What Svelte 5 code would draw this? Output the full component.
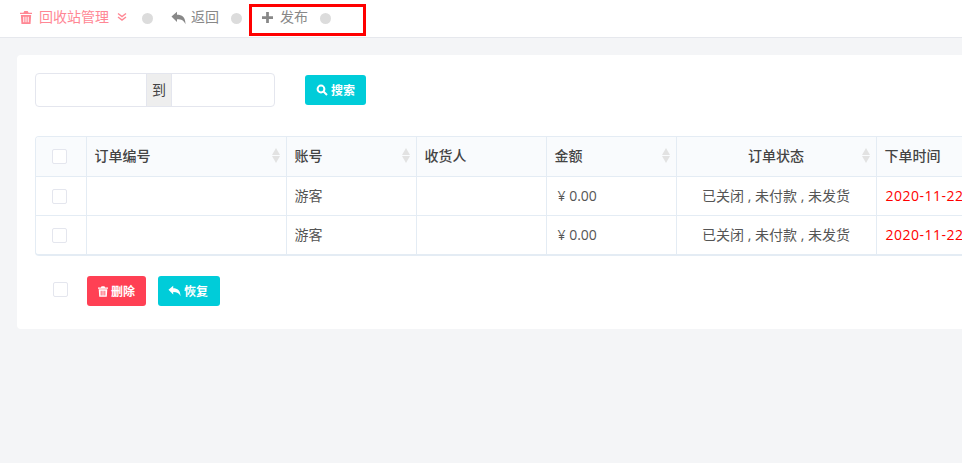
<script>
  const orders = [
    { account: '游客', amount: '¥ 0.00', status: '已关闭 , 未付款 , 未发货', time: '2020-11-22' },
    { account: '游客', amount: '¥ 0.00', status: '已关闭 , 未付款 , 未发货', time: '2020-11-22' }
  ];
  const columns = [
    { label: '订单编号', width: 200, sort: true },
    { label: '账号', width: 130, sort: true },
    { label: '收货人', width: 130 },
    { label: '金额', width: 130, sort: true },
    { label: '订单状态', width: 200, center: true, sort: true },
    { label: '下单时间', width: 200 }
  ];
  // lid + body with three slots, same shape as the nav and the delete button
  const trash = 'M5 0h4l1 2h4v1.500H0V2h4zM1 4.500h12L12.300 15H1.700zM3.800 6.500v6.500h1.200V6.500zM6.400 6.500v6.500h1.200V6.500zM9 6.500v6.500h1.200V6.500z';
  const reply = 'M0.500 5.500 6 0.800V3.800C11 3.800 14.500 6 14.500 13.200 13 9.500 10.500 8.200 6 8.200V11z';
</script>

<div class="page">
  <!-- Top nav -->
  <nav class="topbar">
    <span class="nav-item title">
      <svg class="icon" viewBox="0 0 14 15"><path fill-rule="evenodd" d={trash} /></svg>
      <span>回收站管理</span>
      <svg class="chevrons" viewBox="0 0 10 10"><path d="M1 1.500 5 4.500 9 1.500M1 5 5 8 9 5" /></svg>
    </span>
    <i class="dot first"></i>
    <span class="nav-item back">
      <svg class="icon big" viewBox="0 0 15 14"><path d={reply} /></svg>
      <span>返回</span>
    </span>
    <i class="dot"></i>
    <span class="nav-item">
      <svg class="icon plus" viewBox="0 0 12 12"><path d="M4.500 0h3v4.500H12v3H7.500V12h-3V7.500H0v-3h4.500z" /></svg>
      <span>发布</span>
    </span>
    <i class="dot"></i>
  </nav>
  <div class="marker"></div>

  <main class="card">
    <!-- Date range + search -->
    <div class="search-row">
      <div class="range">
        <div class="range-input left"></div>
        <span class="range-sep">到</span>
        <div class="range-input"></div>
      </div>
      <button class="btn cyan search">
        <svg viewBox="0 0 12 12"><circle cx="5" cy="5" r="3.400" /><path d="M7.500 7.500 11 11" /></svg>
        搜索
      </button>
    </div>

    <!-- Orders table -->
    <div class="table-wrap">
      <table>
        <colgroup>
          <col style="width: 50px" />
          {#each columns as col}
            <col style="width: {col.width}px" />
          {/each}
        </colgroup>
        <thead>
          <tr>
            <th class="check"><span class="checkbox"></span></th>
            {#each columns as col}
              <th class:center={col.center}>
                {col.label}
                {#if col.sort}
                  <span class="sort"><b class="up"></b><b class="down"></b></span>
                {/if}
              </th>
            {/each}
          </tr>
        </thead>
        <tbody>
          {#each orders as order}
            <tr>
              <td class="check"><span class="checkbox"></span></td>
              <td></td>
              <td>{order.account}</td>
              <td></td>
              <td class="amount">{order.amount}</td>
              <td class="center">{order.status}</td>
              <td class="time">{order.time}</td>
            </tr>
          {/each}
        </tbody>
      </table>
    </div>

    <!-- Bulk actions -->
    <div class="actions">
      <span class="checkbox"></span>
      <button class="btn red">
        <svg viewBox="0 0 14 15"><path fill-rule="evenodd" d={trash} /></svg>
        删除
      </button>
      <button class="btn cyan">
        <svg class="reply" viewBox="0 0 15 14"><path d={reply} /></svg>
        恢复
      </button>
    </div>
  </main>
</div>

<style>
  :global(body) {
    margin: 0;
    overflow: hidden;
  }

  .page {
    position: relative;
    width: 962px;
    height: 463px;
    overflow: hidden;
    background: #f4f5f7;
    font-family: "Open Sans", "Noto Sans CJK SC", sans-serif;
    font-size: 14px;
    color: #444;
  }

  /* Top nav */
  .topbar {
    display: flex;
    align-items: center;
    height: 37px;
    padding-left: 20px;
    background: #fff;
    border-bottom: 1px solid #e6e8ed;
    color: #888;
  }
  .nav-item {
    display: flex;
    align-items: center;
    gap: 7px;
  }
  .nav-item > span {
    padding-bottom: 5px;
  }
  .back {
    gap: 5px;
  }
  .title {
    color: #ff8794;
  }
  .icon {
    width: 12px;
    height: 13px;
    margin-bottom: 2px;
    fill: currentColor;
  }
  .icon.big {
    width: 15px;
    height: 14px;
  }
  .icon.plus {
    width: 11px;
    height: 11px;
    margin-left: 1px;
  }
  .chevrons {
    width: 10px;
    height: 10px;
    margin: 0 0 3px 1px;
    fill: none;
    stroke: currentColor;
    stroke-width: 1.400;
  }
  .dot {
    width: 11px;
    height: 11px;
    margin: 0 19px 0 12px;
    border-radius: 50%;
    background: #dcdcdc;
  }
  .dot.first {
    margin: 0 18px 0 15px;
  }

  /* Red marker box drawn over the nav */
  .marker {
    position: absolute;
    left: 249px;
    top: 4px;
    width: 111px;
    height: 26px;
    border: 3px solid #f00;
  }

  .card {
    width: 1100px;
    height: 274px;
    margin: 17px 0 0 17px;
    padding: 18px;
    box-sizing: border-box;
    background: #fff;
    border-radius: 4px;
  }

  .search-row {
    display: flex;
    align-items: center;
    gap: 30px;
    height: 34px;
  }
  .range {
    display: flex;
    width: 240px;
    height: 34px;
    box-sizing: border-box;
    border: 1px solid #e4e6ee;
    border-radius: 4px;
    overflow: hidden;
  }
  .range-input {
    flex: 1;
  }
  .range-input.left {
    flex: 0 0 110px;
  }
  .range-sep {
    width: 26px;
    box-sizing: border-box;
    border: solid #e4e6ee;
    border-width: 0 1px;
    background: #eee;
    text-align: center;
    line-height: 31px;
    font-size: 14px;
  }

  .btn {
    display: inline-flex;
    align-items: center;
    justify-content: center;
    gap: 3px;
    height: 30px;
    padding: 0;
    border: 0;
    border-radius: 3px;
    color: #fff;
    font: inherit;
    font-size: 12px;
    font-weight: 700;
  }
  .btn svg {
    width: 10px;
    height: 11px;
    fill: #fff;
  }
  .btn svg.reply {
    width: 13px;
    height: 12px;
    margin-left: -2px;
  }
  .search svg {
    width: 12px;
    height: 12px;
    fill: none;
    stroke: #fff;
    stroke-width: 2;
  }
  .cyan {
    background: #00ccd9;
  }
  .red {
    background: #ff4054;
  }
  .search {
    width: 61px;
  }
  .actions .red {
    width: 59px;
  }
  .actions .cyan {
    width: 62px;
  }

  /* Table */
  .table-wrap {
    width: 1045px;
    margin-top: 29px;
    border: 1px solid #e4ecf4;
    border-bottom-width: 2px;
    border-radius: 4px;
    overflow: hidden;
  }
  table {
    width: 1040px;
    border-collapse: collapse;
    table-layout: fixed;
  }
  th, td {
    padding: 0 8px 3px;
    border-left: 1px solid #e4ecf4;
    text-align: left;
    white-space: nowrap;
    overflow: hidden;
    font-size: 14px;
  }
  th:first-child, td:first-child {
    border-left: 0;
  }
  th {
    position: relative;
    height: 36px;
    background: #f9fbfd;
    border-bottom: 1px solid #e4ecf4;
    font-weight: 500;
    color: #444;
  }
  td {
    height: 35px;
    color: #555;
  }
  tbody tr + tr td {
    border-top: 1px solid #e4ecf4;
  }
  .check {
    text-align: center;
    padding: 0 3px 3px 0;
  }
  .center {
    text-align: center;
  }
  .amount {
    padding: 0 8px 1px 11px;
  }
  .time {
    color: #f00;
    padding: 0 0 1px 9px;
    letter-spacing: 0.5px;
  }

  /* Sort arrows sit over the header cell */
  .sort {
    position: absolute;
    right: 6px;
    top: 11px;
    display: flex;
    flex-direction: column;
    gap: 1px;
  }
  .sort b {
    width: 0;
    height: 0;
    border: 4px solid transparent;
    border-top-width: 0;
    border-bottom-width: 7px;
    border-bottom-color: #e2e2e2;
  }
  .sort b.down {
    border-bottom-width: 0;
    border-top: 7px solid #e2e2e2;
  }

  .checkbox {
    display: inline-block;
    width: 13px;
    height: 13px;
    vertical-align: middle;
    border: 1px solid #e4e6ee;
    border-radius: 2px;
    background: #fff;
  }

  .actions {
    display: flex;
    align-items: center;
    margin-top: 20px;
    padding-left: 18px;
  }
  .actions .checkbox {
    margin: 0 19px 3px 0;
  }
  .actions .red {
    margin-right: 12px;
  }
</style>
